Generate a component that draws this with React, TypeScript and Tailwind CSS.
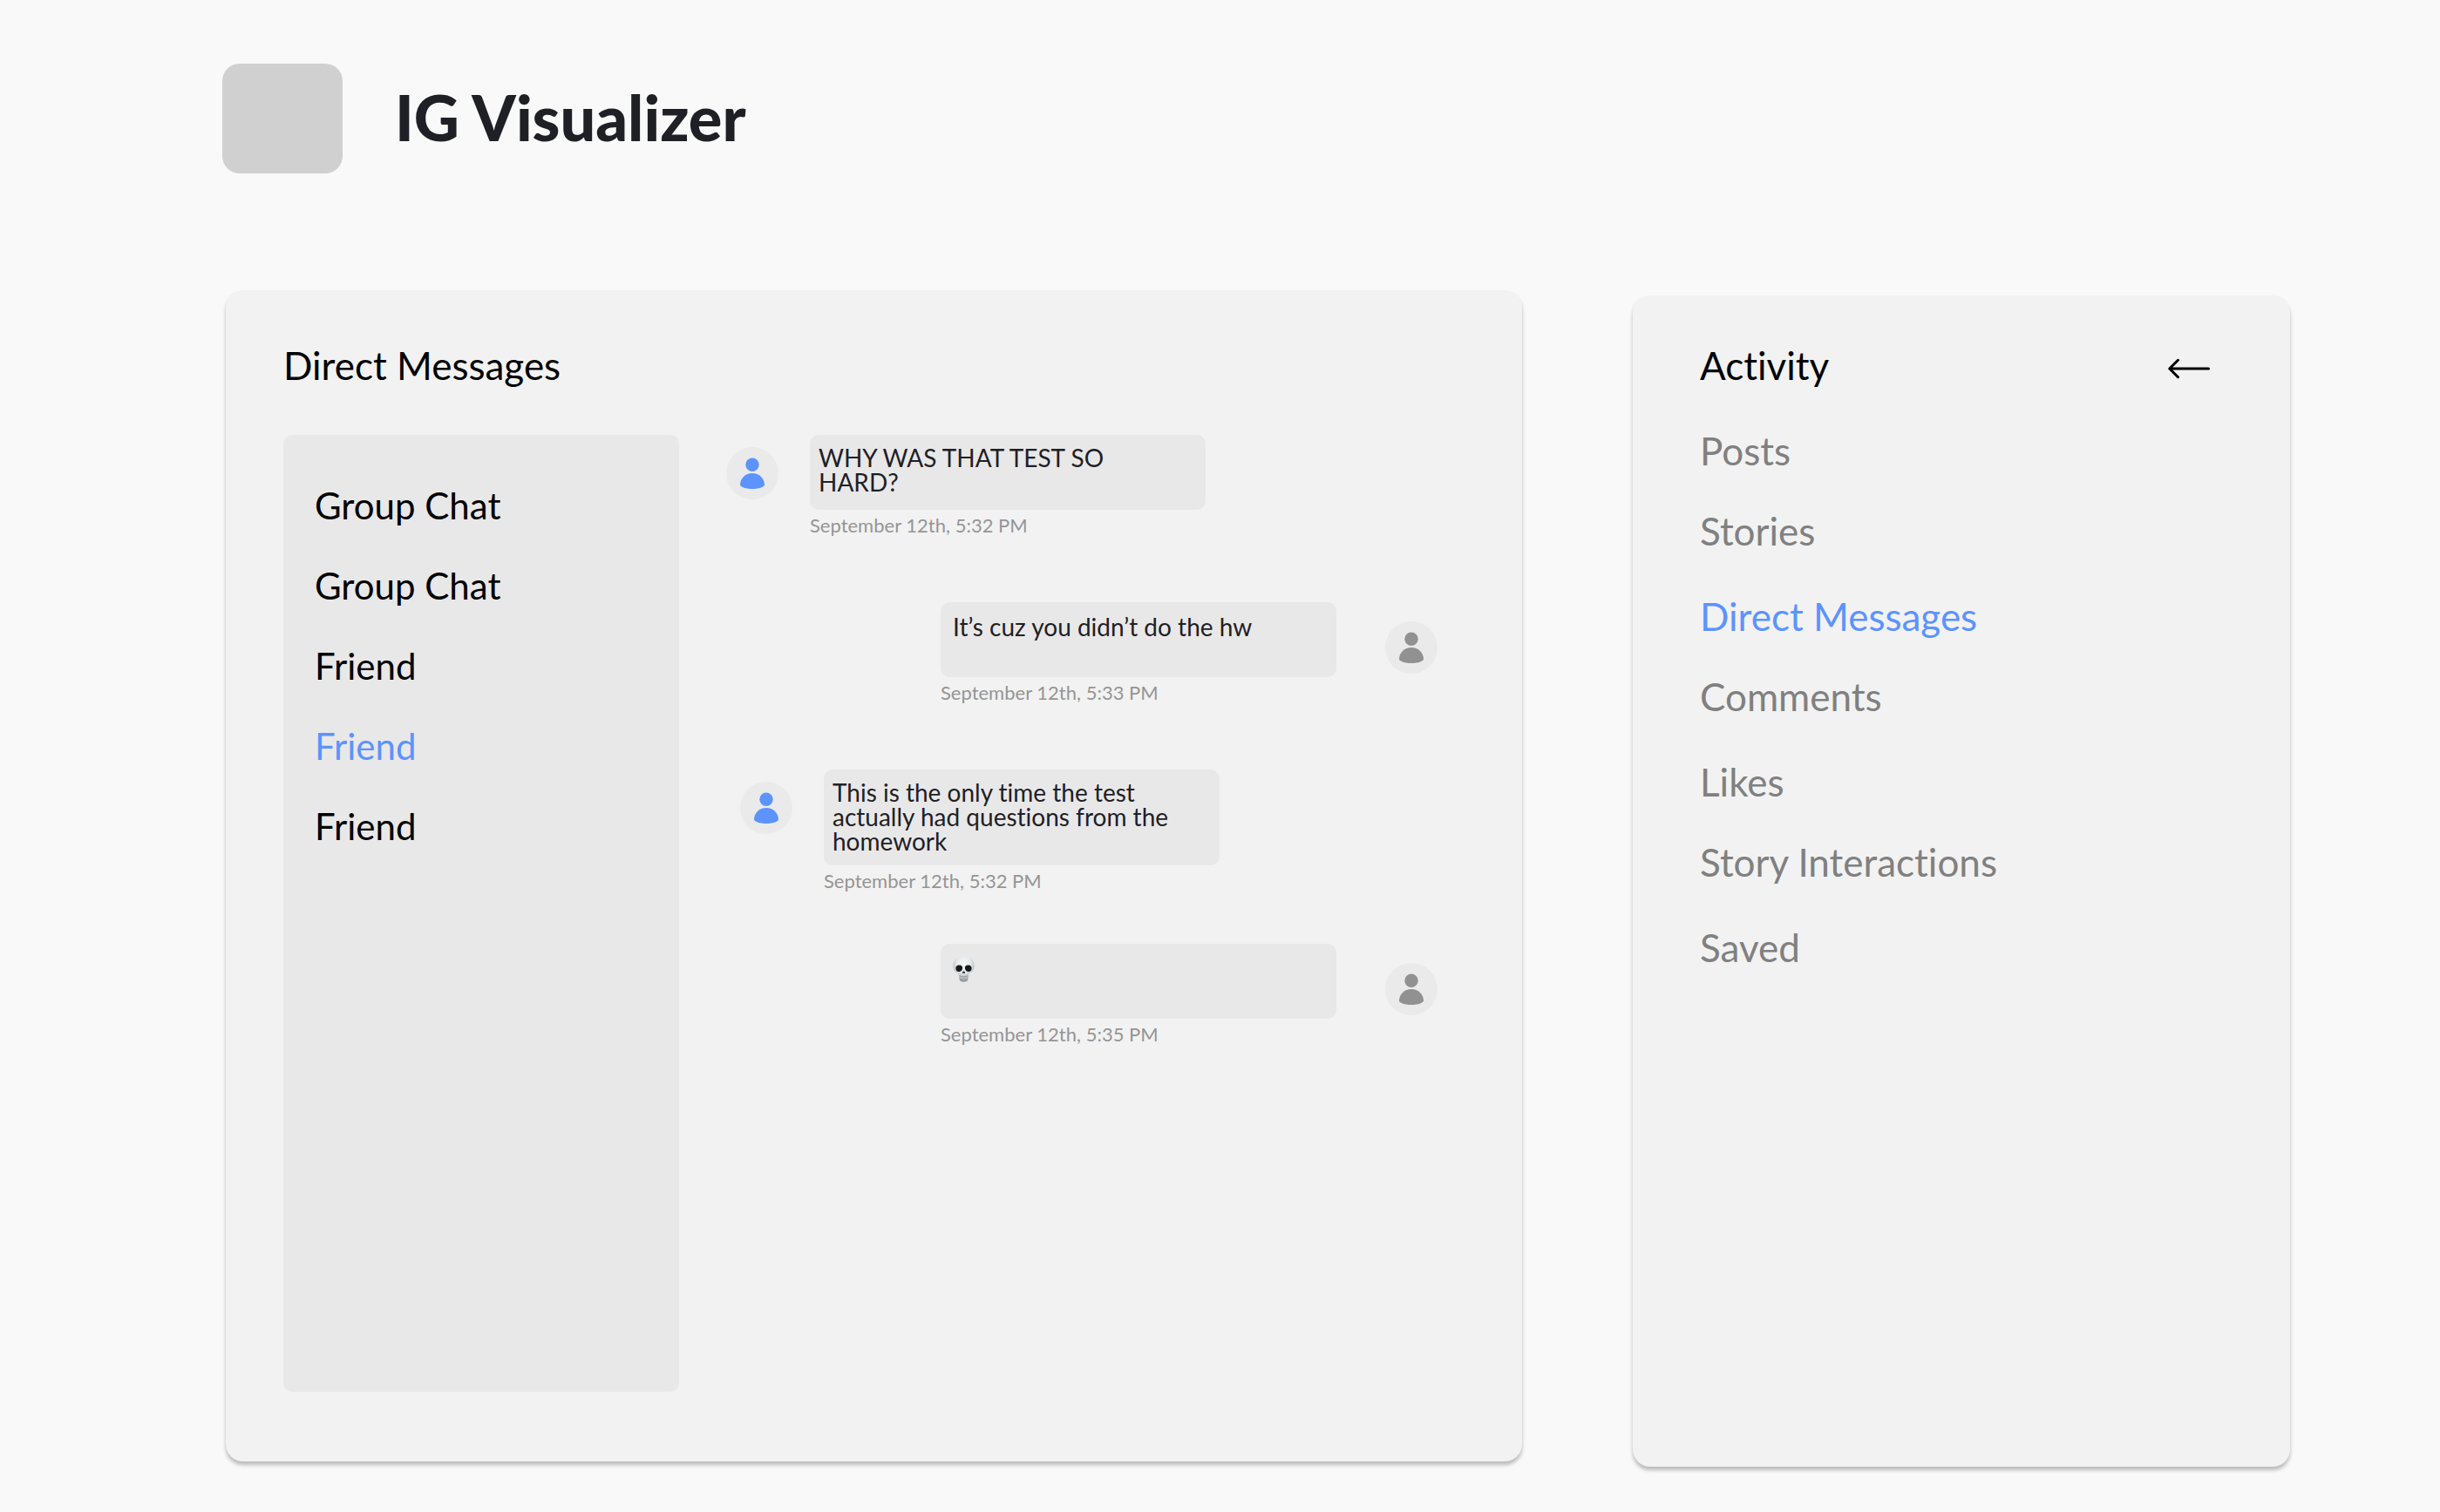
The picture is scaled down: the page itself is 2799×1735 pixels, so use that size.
import { useId } from "react";

type Message = {
  id: number;
  mine: boolean;
  text?: string;
  time: string;
  className: string;
};

const CHATS = ["Group Chat", "Group Chat", "Friend", "Friend", "Friend"];
const ACTIVE_CHAT = 3;

const MESSAGES: Message[] = [
  { id: 1, mine: false, text: "WHY WAS THAT TEST SO HARD?", time: "September 12th, 5:32 PM", className: "" },
  { id: 2, mine: true, text: "It’s cuz you didn’t do the hw", time: "September 12th, 5:33 PM", className: "mt-[75px]" },
  {
    id: 3,
    mine: false,
    text: "This is the only time the test actually had questions from the homework",
    time: "September 12th, 5:32 PM",
    className: "mt-[75px] pl-4",
  },
  { id: 4, mine: true, time: "September 12th, 5:35 PM", className: "mt-[59px]" },
];

const ACTIVITIES = [
  ["Posts", "Stories"],
  ["Direct Messages", "Comments"],
  ["Likes", "Story Interactions"],
  ["Saved"],
];

function Avatar({ className }: { className: string }) {
  return (
    <svg viewBox="0 0 60 60" className={"size-[60px] shrink-0 " + className} aria-hidden="true">
      <circle cx="30" cy="30" r="30" fill="#eaeaea" />
      <circle cx="30" cy="20.2" r="7.7" fill="currentColor" />
      <path
        d="M16 43.5C16 36 22 30 30 30S44 36 44 43.5C44 45.6 38 48 30 48S16 45.6 16 43.5Z"
        fill="currentColor"
      />
    </svg>
  );
}

function Skull() {
  const id = useId();
  return (
    <svg viewBox="0 0 25 30" className="h-[30px] w-[25px]" role="img" aria-label="Skull">
      <defs>
        <radialGradient id={id} cx="0.5" cy="0.3" r="0.7">
          <stop offset="0" stopColor="#f8fbfd" />
          <stop offset="0.5" stopColor="#e3e8eb" />
          <stop offset="1" stopColor="#8f9599" />
        </radialGradient>
      </defs>
      <path
        d="M12.5 0C5.2 0 .4 5 .4 11.2c0 2.6.6 4.4 1.600 5.800.8 1.100 2.700 1.700 3.600 2.700.9.9 1 1.600 1.300 2.500l.7 4.800C7.900 29 9.500 29.700 12.500 29.700s4.600-.7 4.900-2.700l.7-4.800c.3-.9.400-1.600 1.300-2.500.9-1 2.800-1.600 3.600-2.700 1-1.400 1.600-3.200 1.600-5.800C24.600 5 19.800 0 12.500 0Z"
        fill={`url(#${id})`}
      />
      <path
        d="M3.400 14.200c0-2.700 1.600-3.800 4.100-3.600 2.700.2 3.800 1.500 3.500 3.800-.3 2.200-1.900 3.500-4 3.500s-3.600-1.400-3.600-3.700Z"
        fill="#17191b"
      />
      <path
        d="M21.600 14.200c0-2.700-1.600-3.800-4.100-3.600-2.700.2-3.800 1.500-3.500 3.800.3 2.200 1.900 3.500 4 3.500s3.600-1.400 3.600-3.700Z"
        fill="#17191b"
      />
      <path d="M12.500 17.600c-.9 0-1.900 1.300-1.500 1.900.3.5 1 .2 1.500 0 .5.200 1.200.5 1.500 0 .4-.6-.6-1.900-1.500-1.900Z" fill="#222" />
      <path
        d="M7.600 22.600c1.400.8 3 1.100 4.900 1.100s3.500-.3 4.900-1.100M8.400 26.400c1 .9 2.500 1.200 4.100 1.200s3.100-.3 4.100-1.200"
        fill="none"
        stroke="#8d9194"
        strokeWidth="0.8"
      />
    </svg>
  );
}

function MessageRow({ message }: { message: Message }) {
  const { mine, text, time, className } = message;
  return (
    <li className={"flex items-start " + (mine ? "justify-end gap-14 " : "gap-9 ") + className}>
      {!mine && <Avatar className="mt-3.5 text-[#5c93ff]" />}
      <div className="w-[454px]">
        <div
          className={
            "min-h-[86px] rounded-[10px] bg-[#e8e8e8] pr-12 text-[28px] leading-[28px] text-[#1f2026] " +
            (mine ? "pt-3.5 pb-3.5 pl-3.5" : "pt-3 pb-3.5 pl-2.5")
          }
        >
          {text ? <p>{text}</p> : <Skull />}
        </div>
        <time className="mt-[5px] block text-[22px] leading-[26px] text-[#959595]">{time}</time>
      </div>
      {mine && <Avatar className="mt-[22px] text-[#919191]" />}
    </li>
  );
}

export default function App() {
  return (
    <div className="min-h-screen bg-[#f9f9f9] pt-[73px] pr-[172px] pb-[52px] pl-[255px] font-['Lato',sans-serif] text-black [font-variant-ligatures:none]">
      <header className="flex items-start gap-[60px]">
        <div className="h-[126px] w-[138px] rounded-[20px] bg-[#d0d0d0]" />
        <h1 className="text-[72px] leading-[122px] font-black text-[#1f2026]">IG Visualizer</h1>
      </header>

      <main className="mt-[134px] grid grid-cols-[1487fr_754fr] items-start gap-[127px] pl-1">
        <section className="min-h-[1344px] min-w-0 rounded-[20px] bg-[#f2f2f2] pt-[60px] pr-[97px] pb-20 pl-[66px] shadow-[0_4px_4px_rgba(0,0,0,0.25)]">
          <h2 className="text-[44px] leading-[52px]">Direct Messages</h2>
          <div className="mt-[54px] flex gap-[54px]">
            <div className="flex min-h-[1098px] w-[454px] shrink-0 flex-col items-start gap-[42px] rounded-[10px] bg-[#e8e8e8] pt-14 pl-9">
              {CHATS.map((name, i) => (
                <button
                  key={i}
                  type="button"
                  className={"text-[42px] leading-[50px] " + (i === ACTIVE_CHAT ? "text-[#5c93ff]" : "text-black")}
                >
                  {name}
                </button>
              ))}
            </div>
            <ul className="min-w-0 flex-1">
              {MESSAGES.map((message) => (
                <MessageRow key={message.id} message={message} />
              ))}
            </ul>
          </div>
        </section>

        <aside className="mt-1.5 min-h-[1344px] min-w-0 rounded-[20px] bg-[#f2f2f2] pt-[54px] pr-[92px] pb-20 pl-[77px] shadow-[0_4px_4px_rgba(0,0,0,0.25)]">
          <div className="flex items-center justify-between">
            <h2 className="text-[44px] leading-[52px]">Activity</h2>
            <button type="button" aria-label="Back">
              <svg
                viewBox="0 0 48 52"
                className="h-[52px] w-12"
                fill="none"
                stroke="black"
                strokeWidth="3"
                strokeLinecap="round"
                strokeLinejoin="round"
              >
                <path d="M46.5 30H1.800M11.500 20.300 1.800 30l9.700 9.700" />
              </svg>
            </button>
          </div>
          <nav className="mt-[46px] flex flex-col gap-[46px] text-[44px] leading-[52px]">
            {ACTIVITIES.map((group) => (
              <div key={group[0]} className="flex flex-col items-start gap-10">
                {group.map((name) => (
                  <a key={name} href="#" className={name === "Direct Messages" ? "text-[#5c93ff]" : "text-[#808080]"}>
                    {name}
                  </a>
                ))}
              </div>
            ))}
          </nav>
        </aside>
      </main>
    </div>
  );
}
